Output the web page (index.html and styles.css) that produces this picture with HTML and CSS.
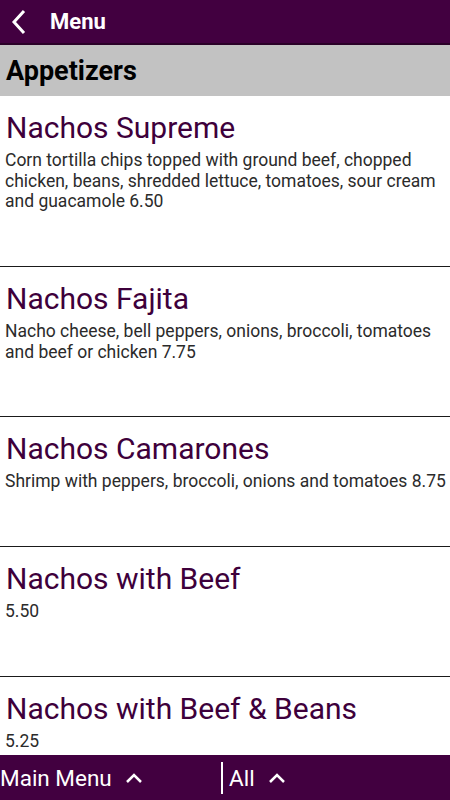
FILE: index.html
```html
<!DOCTYPE html>
<html lang="en">
  <head>
    <meta charset="UTF-8" />
    <meta name="viewport" content="width=device-width, initial-scale=1.0" />
    <title>Menu</title>
    <link rel="stylesheet" href="styles.css">
  </head>
  <body>
    <div class="topbar">
      <svg class="back" width="16" height="26" viewBox="0 0 16 26">
        <path d="M13 2 L3 13 L13 24" fill="none" stroke="#fff" stroke-width="3" />
      </svg>
      <span class="topbar-title">Menu</span>
    </div>

    <div class="section">Appetizers</div>

    <div class="list">
      <div class="item tall">
        <div class="item-name">Nachos Supreme</div>
        <div class="item-desc">Corn tortilla chips topped with ground beef, chopped chicken, beans, shredded lettuce, tomatoes, sour cream and guacamole 6.50</div>
      </div>
      <div class="item mid">
        <div class="item-name">Nachos Fajita</div>
        <div class="item-desc">Nacho cheese, bell peppers, onions, broccoli, tomatoes and beef or chicken 7.75</div>
      </div>
      <div class="item">
        <div class="item-name">Nachos Camarones</div>
        <div class="item-desc">Shrimp with peppers, broccoli, onions and tomatoes 8.75</div>
      </div>
      <div class="item">
        <div class="item-name">Nachos with Beef</div>
        <div class="item-desc">5.50</div>
      </div>
      <div class="item">
        <div class="item-name">Nachos with Beef &amp; Beans</div>
        <div class="item-desc">5.25</div>
      </div>
    </div>

    <div class="bottombar">
      <div class="tab">
        Main Menu
        <svg class="caret" width="18" height="12" viewBox="0 0 18 12">
          <path d="M2 10 L9 3 L16 10" fill="none" stroke="#fff" stroke-width="2.5" />
        </svg>
      </div>
      <div class="tab tab-right">
        All
        <svg class="caret" width="18" height="12" viewBox="0 0 18 12">
          <path d="M2 10 L9 3 L16 10" fill="none" stroke="#fff" stroke-width="2.5" />
        </svg>
      </div>
    </div>
  </body>
</html>
```

FILE: styles.css
```css
body {
  margin: 0;
  width: 450px;
  height: 800px;
  overflow: hidden;
  font-family: Roboto, "Noto Sans", sans-serif;
  background: #fff;
  display: flex;
  flex-direction: column;
}

/* top action bar */
.topbar {
  height: 43px;
  background: #420040;
  border-bottom: 2px solid #2a0028;
  display: flex;
  align-items: center;
  color: #fff;
  flex-shrink: 0;
}

.back {
  margin-left: 11px;
}

.topbar-title {
  margin-left: 23px;
  font-size: 22px;
  font-weight: bold;
}

/* section header */
.section {
  height: 51px;
  background: #c2c2c2;
  color: #000;
  font-size: 27px;
  font-weight: bold;
  display: flex;
  align-items: center;
  padding-left: 6px;
  flex-shrink: 0;
}

.list {
  flex: 1;
  overflow: hidden;
}

.item {
  height: 129px;
  border-bottom: 1px solid #1a1a1a;
  padding: 0 0 0 5px;
}

.item.tall {
  height: 170px;
}

.item.mid {
  height: 149px;
}

.item-name {
  color: #3e003b;
  font-size: 30px;
  line-height: 36px;
  padding-top: 14px;
  padding-left: 1px;
}

.item-desc {
  color: #2b2b2b;
  font-size: 17.5px;
  line-height: 20.5px;
  margin-top: 4px;
}

/* bottom bar */
.bottombar {
  height: 45px;
  background: #420040;
  display: flex;
  align-items: center;
  color: #fff;
  font-size: 22.5px;
  flex-shrink: 0;
}

.tab {
  width: 224px;
  display: flex;
  align-items: center;
  gap: 13px;
}

.tab-right {
  border-left: 2px solid #fff;
  height: 32px;
  padding-left: 6px;
}
```
